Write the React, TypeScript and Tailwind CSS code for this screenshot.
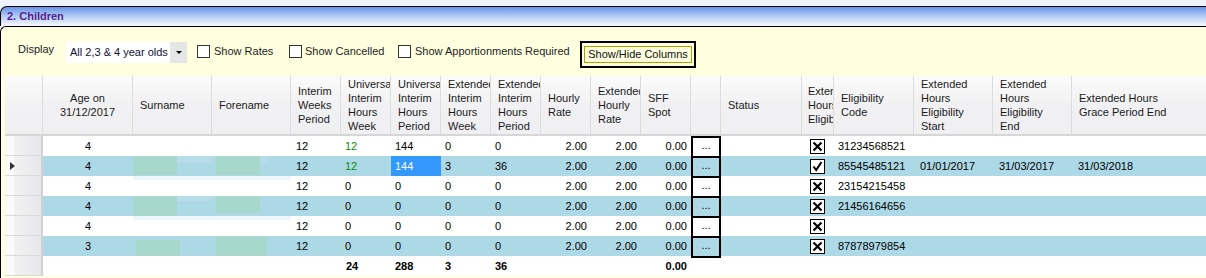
import React from "react";

type Col = {
  key: string;
  w: number;
  head: string[];
  align?: "left" | "center" | "right";
  pad?: string;
  headPad?: string;
};

const cols: Col[] = [
  { key: "age", w: 90, head: ["Age on", "31/12/2017"], align: "center" },
  { key: "surname", w: 79, head: ["Surname"] },
  { key: "forename", w: 79, head: ["Forename"] },
  { key: "iwp", w: 50, head: ["Interim", "Weeks", "Period"], pad: "pl-[5px]" },
  { key: "uiw", w: 50, head: ["Universal", "Interim", "Hours", "Week"] },
  { key: "uip", w: 50, head: ["Universal", "Interim", "Hours", "Period"] },
  { key: "eiw", w: 50, head: ["Extended", "Interim", "Hours", "Week"] },
  { key: "eip", w: 50, head: ["Extended", "Interim", "Hours", "Period"] },
  { key: "rate", w: 50, head: ["Hourly", "Rate"], align: "right" },
  { key: "erate", w: 50, head: ["Extended", "Hourly", "Rate"], align: "right" },
  { key: "sff", w: 50, head: ["SFF", "Spot"], align: "right" },
  { key: "btn", w: 30, head: [] },
  { key: "status", w: 81, head: ["Status"] },
  { key: "elig", w: 32, head: ["Extended", "Hours", "Eligible"], headPad: "pl-[6px]" },
  { key: "code", w: 80, head: ["Eligibility", "Code"], pad: "pl-[4px]" },
  { key: "start", w: 79, head: ["Extended", "Hours", "Eligibility", "Start"], pad: "pl-[6px]" },
  { key: "end", w: 79, head: ["Extended", "Hours", "Eligibility", "End"], pad: "pl-[6px]" },
  { key: "grace", w: 160, head: ["Extended Hours", "Grace Period End"], pad: "pl-[6px]" },
];

type Row = Record<string, string> & { blobs?: string; tick?: string };

const rows: Row[] = [
  { age: "4", iwp: "12", uiw: "12", uip: "144", eiw: "0", eip: "0", rate: "2.00", erate: "2.00", sff: "0.00", tick: "x", code: "31234568521" },
  { age: "4", iwp: "12", uiw: "12", uip: "144", eiw: "3", eip: "36", rate: "2.00", erate: "2.00", sff: "0.00", tick: "v", code: "85545485121", start: "01/01/2017", end: "31/03/2017", grace: "31/03/2018", blobs: "a" },
  { age: "4", iwp: "12", uiw: "0", uip: "0", eiw: "0", eip: "0", rate: "2.00", erate: "2.00", sff: "0.00", tick: "x", code: "23154215458" },
  { age: "4", iwp: "12", uiw: "0", uip: "0", eiw: "0", eip: "0", rate: "2.00", erate: "2.00", sff: "0.00", tick: "x", code: "21456164656", blobs: "b" },
  { age: "4", iwp: "12", uiw: "0", uip: "0", eiw: "0", eip: "0", rate: "2.00", erate: "2.00", sff: "0.00", tick: "x", code: "" },
  { age: "3", iwp: "12", uiw: "0", uip: "0", eiw: "0", eip: "0", rate: "2.00", erate: "2.00", sff: "0.00", tick: "x", code: "87878979854", blobs: "c" },
];

const totals: Record<string, string> = { uiw: "24", uip: "288", eiw: "3", eip: "36", sff: "0.00" };

const TickBox = ({ kind }: { kind: string }) => (
  <div className="w-[15px] h-[15px] border border-black bg-white flex items-center justify-center">
    {kind === "x" ? (
      <svg width="11" height="11" viewBox="0 0 11 11">
        <path d="M1.5 1.5 L9.5 9.5 M9.5 1.5 L1.5 9.5" stroke="#000" strokeWidth="2.2" />
      </svg>
    ) : (
      <svg width="11" height="11" viewBox="0 0 11 11">
        <path d="M1.5 5.5 L4.2 9 L9.5 1" stroke="#000" strokeWidth="2" fill="none" />
      </svg>
    )}
  </div>
);

const Blob = ({ which, side }: { which: string; side: "s" | "f" }) => {
  // blurred name placeholders
  if (which === "a")
    return side === "s" ? (
      <div className="flex h-full">
        <div className="w-[44px] h-[19px] bg-[#a6d8cc]" />
        <div className="w-[35px] h-[7px] bg-[#b8dde8]" />
      </div>
    ) : (
      <div className="flex h-full pl-[4px]">
        <div className="w-[44px] h-[19px] bg-[#a6d8cc]" />
        <div className="w-[7px] h-[8px] bg-[#b8dde8]" />
      </div>
    );
  if (which === "b")
    return side === "s" ? (
      <div className="flex h-full">
        <div className="w-[44px] h-[20px] bg-[#a6d8cc]" />
        <div className="w-[35px] h-[5px] bg-[#b8dde8]" />
      </div>
    ) : (
      <div className="flex h-full pl-[4px]">
        <div className="w-[44px] h-[17px] bg-[#a6d8cc]" />
      </div>
    );
  return side === "s" ? (
    <div className="flex h-full items-end">
      <div className="w-[3px]" />
      <div className="w-[44px] h-[16px] bg-[#a6d8cc]" />
    </div>
  ) : (
    <div className="flex h-full pl-[4px]">
      <div className="w-[51px] h-[20px] bg-[#a6d8cc]" />
    </div>
  );
};

const Cell = ({ col, children, className = "" }: { col: Col; children?: React.ReactNode; className?: string }) => {
  const align =
    col.align === "center" ? "justify-center" : col.align === "right" ? "justify-end pr-[4px]" : `justify-start ${col.pad ?? "pl-[4px]"}`;
  return (
    <div style={{ width: col.w }} className={`shrink-0 h-full flex items-center overflow-hidden whitespace-nowrap ${align} ${className}`}>
      {children}
    </div>
  );
};

const App = () => {
  return (
    <div className="w-[1206px] h-[278px] overflow-hidden bg-[#eef3fb] text-[11px] text-black" style={{ fontFamily: '"Liberation Sans", Arial, sans-serif' }}>
      {/* strip above title */}
      <div className="h-[6px]" />
      {/* Title bar */}
      <div className="h-[20px] border-t border-l border-black rounded-tl-[7px] bg-gradient-to-b from-[#6893e6] via-[#b5cdf3] to-[#f6f9ff] flex items-center pl-[6px]">
        <span className="font-bold text-[#561f92]">2. Children</span>
      </div>
      {/* Body */}
      <div className="h-[252px] border-t border-l border-black rounded-tl-[6px] bg-[#ffffe0]">
        {/* Toolbar */}
        <div className="h-[49px] flex items-start">
          <div className="ml-[17px] mt-[15px] w-[48px] leading-[14px] text-[#1a1a2a]">Display</div>
          <div className="mt-[15px] w-[121px] h-[21px] bg-white flex items-center">
            <span className="pl-[4px] flex-1 text-[#101035]">All 2,3 &amp; 4 year olds</span>
            <div className="w-[17px] h-full bg-[#e6e6e6] flex items-center justify-center">
              <div className="w-0 h-0 border-l-[3px] border-r-[3px] border-t-[3px] border-l-transparent border-r-transparent border-t-black" />
            </div>
          </div>
          <div className="ml-[10px] mt-[17px] w-[92px] flex items-center gap-[4px] leading-[14px]">
            <div className="w-[13px] h-[13px] border border-[#333] bg-white" />
            <span className="text-[#1e1e1e]">Show Rates</span>
          </div>
          <div className="mt-[17px] w-[109px] flex items-center gap-[3px] leading-[14px]">
            <div className="w-[13px] h-[13px] border border-[#333] bg-white" />
            <span className="text-[#1e1e1e]">Show Cancelled</span>
          </div>
          <div className="mt-[17px] w-[182px] flex items-center gap-[4px] leading-[14px]">
            <div className="w-[13px] h-[13px] border border-[#333] bg-white" />
            <span className="text-[#1e1e1e]">Show Apportionments Required</span>
          </div>
          <div className="mt-[14px] w-[116px] h-[27px] border-2 border-black flex items-center justify-center">
            <div className="w-[108px] h-[17px] border border-[#a8a400] flex items-center justify-center text-[#111]">
              Show/Hide Columns
            </div>
          </div>
        </div>

        {/* Grid */}
        <div className="ml-[4px] flex">
          {/* Row header column */}
          <div className="w-[38px] shrink-0 flex flex-col">
            <div className="h-[60px] bg-gradient-to-b from-[#fbfbfb] via-[#f2f2f4] to-[#f0f0f2] border-b-2 border-[#d6d6d6] border-r border-r-[#dcdcdc]" />
            {[0, 1, 2, 3, 4, 5, 6].map((i) => (
              <div
                key={i}
                className="h-[20px] flex items-center border-b border-[#dadada] border-r-2 border-r-[#d2d2d4] bg-[linear-gradient(to_right,#fbfbfb_9px,#f2f2f3_9px,#e7e7ea)]"
              >
                {i === 1 && (
                  <div className="ml-[5px] w-0 h-0 border-t-[4px] border-b-[4px] border-l-[5px] border-t-transparent border-b-transparent border-l-[#333]" />
                )}
              </div>
            ))}
          </div>

          {/* Data columns */}
          <div className="flex flex-col">
            {/* Header */}
            <div className="h-[60px] flex bg-gradient-to-b from-[#fbfbfb] via-[#f1f1f3] to-[#f0f0f2] border-b-2 border-[#d6d6d6]">
              {cols.map((c) => (
                <div
                  key={c.key}
                  style={{ width: c.w }}
                  className={`shrink-0 h-full flex flex-col justify-center overflow-hidden whitespace-nowrap leading-[14px] border-r border-[#dcdcdc] ${
                    c.align === "center" ? "items-center" : `items-start ${c.headPad ?? "pl-[7px]"}`
                  }`}
                >
                  {c.head.map((l, i) => (
                    <div key={i} className="text-[#1a1a1a]">
                      {l}
                    </div>
                  ))}
                </div>
              ))}
            </div>

            {/* Rows */}
            {rows.map((r, ri) => (
              <div key={ri} className={`h-[20px] flex ${ri % 2 === 1 ? "bg-[#add8e6]" : "bg-white"}`}>
                {cols.map((c) => {
                  if (c.key === "surname" || c.key === "forename")
                    return (
                      <div key={c.key} style={{ width: c.w }} className="shrink-0 h-full overflow-hidden">
                        {r.blobs ? (
                          <Blob which={r.blobs} side={c.key === "surname" ? "s" : "f"} />
                        ) : ri === 2 || ri === 4 ? (
                          <div className="h-[4px] bg-[#eef6f9]" />
                        ) : null}
                      </div>
                    );
                  if (c.key === "btn")
                    return (
                      <div key={c.key} style={{ width: c.w }} className="shrink-0 h-full border-x-2 border-t-2 border-black flex items-center justify-center leading-none pb-[3px]">
                        ...
                      </div>
                    );
                  if (c.key === "elig")
                    return (
                      <Cell key={c.key} col={c} className="pl-[8px]">
                        <TickBox kind={r.tick!} />
                      </Cell>
                    );
                  const selected = ri === 1 && c.key === "uip";
                  const green = ri < 2 && c.key === "uiw";
                  return (
                    <Cell key={c.key} col={c} className={selected ? "bg-[#3399ff] text-white pl-[3px]" : green ? "text-[#108a10]" : ""}>
                      {r[c.key] ?? ""}
                    </Cell>
                  );
                })}
              </div>
            ))}

            {/* Totals */}
            <div className="h-[20px] flex bg-white font-bold">
              {cols.map((c) =>
                c.key === "btn" ? (
                  <div key={c.key} style={{ width: c.w }} className="shrink-0 h-full border-t-2 border-black" />
                ) : (
                  <Cell key={c.key} col={c} className={c.key === "uiw" ? "pl-[5px]" : ""}>
                    {totals[c.key] ?? ""}
                  </Cell>
                )
              )}
            </div>
          </div>
        </div>
      </div>
    </div>
  );
};

export default App;
